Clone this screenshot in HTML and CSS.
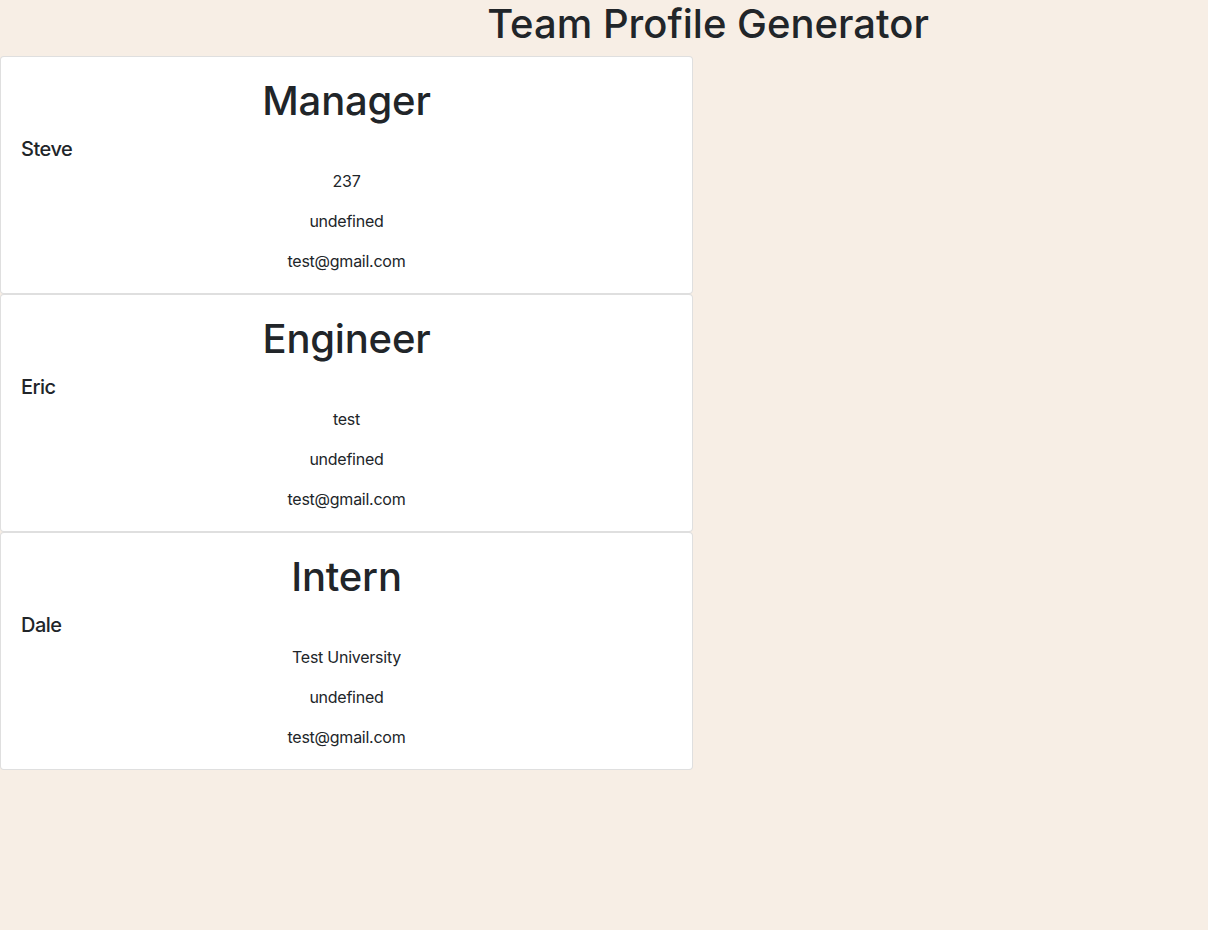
FILE: index.html
```html
<!DOCTYPE html>
<html lang="en">
<head>
<meta charset="utf-8">
<title>Team Profile Generator</title>
<link rel="stylesheet" href="styles.css">
</head>
<body>
<header class="page-header">
  <h1 class="page-title">Team Profile Generator</h1>
</header>
<main class="team">
  <section class="card">
    <h1 class="card-title">Manager</h1>
    <h5 class="card-name">Steve</h5>
    <p class="card-text">237</p>
    <p class="card-text">undefined</p>
    <p class="card-text">test@gmail.com</p>
  </section>
  <section class="card">
    <h1 class="card-title">Engineer</h1>
    <h5 class="card-name">Eric</h5>
    <p class="card-text">test</p>
    <p class="card-text">undefined</p>
    <p class="card-text">test@gmail.com</p>
  </section>
  <section class="card">
    <h1 class="card-title">Intern</h1>
    <h5 class="card-name">Dale</h5>
    <p class="card-text">Test University</p>
    <p class="card-text">undefined</p>
    <p class="card-text">test@gmail.com</p>
  </section>
</main>
</body>
</html>
```
FILE: styles.css
```css
* { box-sizing: border-box; }
html, body {
  margin: 0;
  padding: 0;
}
body {
  background: #f7eee5;
  color: #212529;
  font-family: Inter, "Noto Sans", "Liberation Sans", sans-serif;
  font-size: 16px;
  line-height: 1.5;
  min-height: 930px;
}
.page-header {
  padding-left: 208px;
  text-align: center;
}
.page-title {
  margin: 0 0 8px;
  font-size: 40px;
  font-weight: 500;
  line-height: 1.2;
}
.team {
  width: 693px;
  display: flex;
  flex-direction: column;
}
.card {
  background: #fff;
  border: 1px solid rgba(0, 0, 0, 0.125);
  border-radius: 4px;
  padding: 20px;
  text-align: center;
}
.card-title {
  margin: 0 0 12px;
  font-size: 40px;
  font-weight: 500;
  line-height: 1.2;
  letter-spacing: -0.2px;
}
.card-name {
  margin: 0 0 8px;
  font-size: 20px;
  font-weight: 500;
  line-height: 1.2;
  letter-spacing: -0.5px;
  text-align: left;
}
.card-text {
  margin: 0 0 16px;
  letter-spacing: -0.25px;
}
.card-text:last-child {
  margin-bottom: 0;
}
```
